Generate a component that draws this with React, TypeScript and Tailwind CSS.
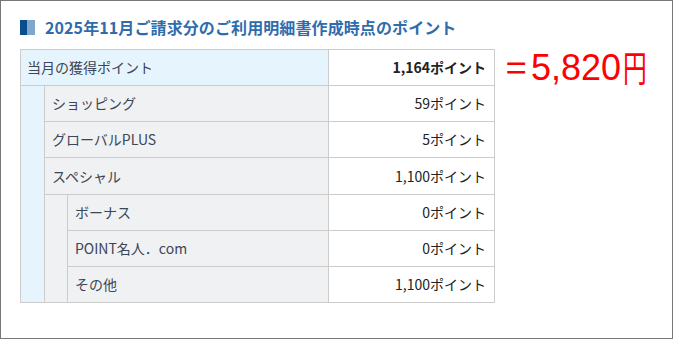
import React from "react";

const font = { fontFamily: '"Noto Sans CJK JP", "Noto Sans", sans-serif' };

export default function App() {
  const cellB = "border-r border-b border-[#cccccc]";
  const label = `${cellB} bg-[#f0f1f3] flex items-center pl-[7px] text-[#3b4656]`;
  const val = `${cellB} bg-white flex items-center justify-end pr-[8px] text-[#222]`;
  return (
    <div className="w-[673px] h-[339px] border border-[#777] bg-white text-[14px]" style={font}>
      <div className="flex items-center pt-[18px] pl-[19px] gap-[10px]">
        <div className="flex w-[15px] h-[15px]">
          <div className="w-[7px] h-full bg-[#0b4c8c]" />
          <div className="w-[8px] h-full bg-[#7fa6cc]" />
        </div>
        <div className="text-[16px] font-bold text-[#2f6cad] leading-[16px] tracking-[0.1px]">
          2025年11月ご請求分のご利用明細書作成時点のポイント
        </div>
      </div>
      <div className="flex items-start pl-[19px] mt-[14px]">
        <div className="grid grid-cols-[24px_23px_261px_166px] w-[475px] border-l border-t border-[#cccccc]" style={{ gridTemplateRows: "36px 36px 36px 37px 36px 36px 36px" }}>
          <div className={`${cellB} col-span-3 bg-[#e6f4fd] flex items-center pl-[6px] text-[#3b4656]`}>当月の獲得ポイント</div>
          <div className={`${val} font-bold`}>1,164ポイント</div>

          <div className={`${cellB} row-span-6 bg-[#e6f4fd]`} />
          <div className={`${label} col-span-2`}>ショッピング</div>
          <div className={val}>59ポイント</div>

          <div className={`${label} col-span-2`}>グローバルPLUS</div>
          <div className={val}>5ポイント</div>

          <div className={`${label} col-span-2`}>スペシャル</div>
          <div className={val}>1,100ポイント</div>

          <div className={`${cellB} row-span-3 bg-[#f0f1f3]`} />
          <div className={label}>ボーナス</div>
          <div className={val}>0ポイント</div>

          <div className={label}>POINT名人．com</div>
          <div className={val}>0ポイント</div>

          <div className={label}>その他</div>
          <div className={val}>1,100ポイント</div>
        </div>
        <div className="ml-[9px] mt-[1px] flex items-center h-[36px] text-[36px] leading-[36px] text-[#ff0000]" style={{ fontFamily: '"Liberation Sans", "Noto Sans CJK JP", sans-serif' }}>
          <span className="inline-block w-[24px]">
            <span className="inline-block origin-left scale-x-[0.68]" style={{ fontFamily: '"Noto Sans CJK JP", sans-serif' }}>＝</span>
          </span>
          <span className="ml-[3px]">5,820</span>
          <span className="inline-block w-[24px] ml-[2px]">
            <span className="inline-block origin-left scale-x-[0.66]" style={{ fontFamily: '"Noto Sans CJK JP", sans-serif' }}>円</span>
          </span>
        </div>
      </div>
    </div>
  );
}
